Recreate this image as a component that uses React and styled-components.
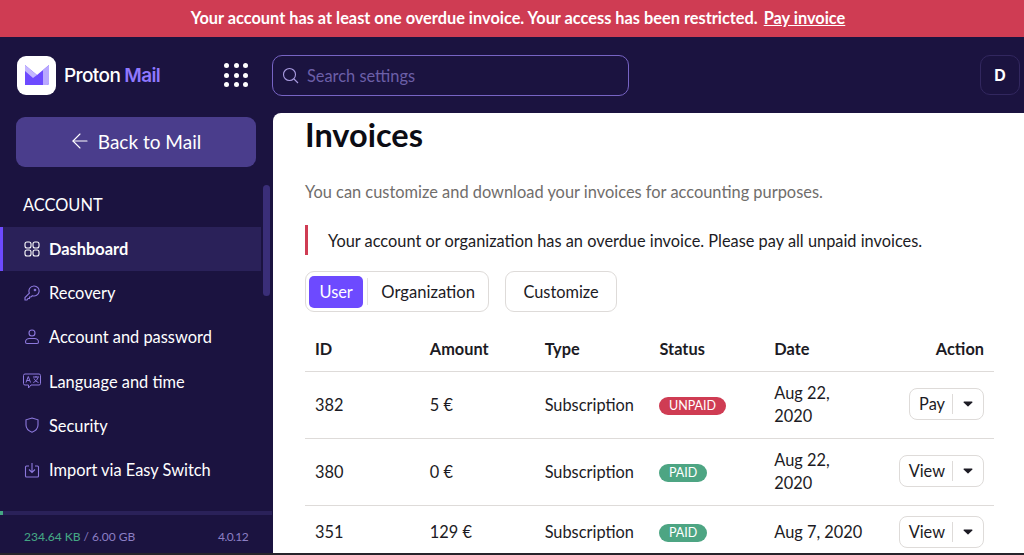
import styled, { createGlobalStyle } from "styled-components";
import { ArrowLeft } from "lucide-react";

const GlobalStyle = createGlobalStyle`
  html, body {
    margin: 0;
    height: 100%;
    overflow: hidden;
    background: #1b1340;
    font-family: "Lato", "Open Sans", sans-serif;
  }
  * {
    box-sizing: border-box;
  }
`;

const Page = styled.div`
  width: 1024px;
  height: 555px;
  display: flex;
  flex-direction: column;
  overflow: hidden;
  border-bottom: 2px solid #26232b;
`;

const Banner = styled.div`
  height: 37px;
  flex: none;
  background: #cf3c53;
  color: #fff;
  font-size: 16.33px;
  font-weight: 700;
  display: flex;
  align-items: center;
  justify-content: center;
  gap: 6px;
  padding: 0 0 2px 12px;

  a {
    color: #fff;
    text-decoration: underline;
  }
`;

const Header = styled.header`
  height: 76px;
  flex: none;
  display: flex;
  align-items: center;
  padding: 0 4px 0 17px;
`;

const LogoBox = styled.div`
  width: 39px;
  height: 39px;
  border-radius: 9px;
  background: #fff;
  display: flex;
  align-items: center;
  justify-content: center;
`;

const LogoText = styled.div`
  margin-left: 8px;
  width: 104px;
  font-size: 19px;
  font-weight: 500;
  font-family: "Inter", sans-serif;
  letter-spacing: -0.6px;
  color: #fff;

  span {
    color: #8f78ff;
    font-weight: 600;
    margin-left: 4px;
  }
`;

const AppsGrid = styled.div`
  margin-left: 56px;
  display: grid;
  grid-template-columns: repeat(3, 5px);
  gap: 4.5px 4.7px;

  i {
    width: 5px;
    height: 5px;
    border-radius: 50%;
    background: #fff;
  }
`;

const SearchBox = styled.div`
  margin-left: 23.6px;
  width: 357px;
  height: 41px;
  border: 1px solid #7764c4;
  border-radius: 10px;
  display: flex;
  align-items: center;
  gap: 8px;
  padding-left: 9px;
  color: #6c5fa8;
  font-size: 16.4px;
`;

const UserButton = styled.div`
  margin-left: auto;
  width: 40px;
  height: 40px;
  border: 1px solid #32275f;
  border-radius: 10px;
  color: #fff;
  font-size: 16px;
  font-weight: 700;
  font-family: "Inter", sans-serif;
  display: flex;
  align-items: center;
  justify-content: center;
`;

const Body = styled.div`
  flex: 1;
  min-height: 0;
  display: flex;
`;

const Sidebar = styled.aside`
  width: 273px;
  flex: none;
  position: relative;
  display: flex;
  flex-direction: column;
  padding-top: 4px;
`;

const BackButton = styled.div`
  margin-left: 16px;
  width: 240px;
  height: 50px;
  border-radius: 9px;
  background: #4a3d8c;
  color: #fff;
  font-size: 19px;
  display: flex;
  align-items: center;
  justify-content: center;
  gap: 6px;
  padding: 0 3px 2px 0;
`;

const SectionTitle = styled.div`
  margin: 27px 0 0 23px;
  height: 22px;
  line-height: 22px;
  color: #fff;
  font-size: 16.4px;
`;

const Nav = styled.nav`
  margin-top: 11px;
  width: 261px;
  display: flex;
  flex-direction: column;
`;

const NavItem = styled.div`
  height: 44.2px;
  display: flex;
  align-items: center;
  padding: 0 0 1px ${(props) => (props.$active ? "19px" : "22px")};
  color: #fff;
  font-size: 16.4px;
  font-weight: ${(props) => (props.$active ? 700 : 400)};
  background: ${(props) => (props.$active ? "#2a2159" : "transparent")};
  border-left: ${(props) => (props.$active ? "3px solid #6d4aff" : "0")};
`;

const NavIconSlot = styled.span`
  width: 27px;
  flex: none;
  display: flex;
  padding-right: 8px;
  justify-content: center;
  color: ${(props) => (props.$active ? "#fff" : "#8c78dc")};
`;

const ScrollThumb = styled.div`
  position: absolute;
  left: 263px;
  top: 72px;
  width: 7px;
  height: 111px;
  border-radius: 4px;
  background: #3a2e78;
`;

const Storage = styled.div`
  margin-top: auto;
  height: 42px;
  display: flex;
  flex-direction: column;
`;

const StorageBar = styled.div`
  height: 4px;
  width: 272px;
  background: #2a2159;

  i {
    display: block;
    width: 3px;
    height: 4px;
    background: #44a583;
  }
`;

const StorageRow = styled.div`
  flex: 1;
  display: flex;
  align-items: center;
  justify-content: space-between;
  padding: 4px 25px 0 24px;
  font-size: 12px;
  color: #8c7fc4;

  b {
    font-weight: 500;
    color: #44a583;
  }
`;

const Version = styled.div`
  letter-spacing: -0.6px;
`;

const Main = styled.main`
  flex: 1;
  min-width: 0;
  background: #fff;
  border-top-left-radius: 8px;
  padding: 4px 30px 0 32px;
  overflow: hidden;
  color: #1c1b24;
`;

const Title = styled.h1`
  margin: 0;
  font-size: 32.5px;
  line-height: 36px;
  font-weight: 700;
  color: #0c0c14;
`;

const Lead = styled.p`
  margin: 27px 0 0;
  font-size: 16.4px;
  line-height: 24px;
  color: #706d6b;
`;

const Alert = styled.div`
  margin-top: 21px;
  height: 30px;
  border-left: 3px solid #cf3c53;
  padding-left: 20px;
  display: flex;
  align-items: center;
  font-size: 16.35px;
`;

const Toolbar = styled.div`
  margin-top: 16px;
  display: flex;
  gap: 16px;
`;

const Toggle = styled.div`
  height: 41px;
  border: 1px solid #dedbd9;
  border-radius: 9px;
  display: flex;
  align-items: center;
  padding: 0 3px;
`;

const ToggleItem = styled.div`
  height: 32px;
  display: flex;
  align-items: center;
  padding: ${(props) => (props.$active ? "0 10.5px" : "0 10px 0 13px")};
  border-radius: 5px;
  font-size: ${(props) => (props.$active ? "16.35px" : "16.6px")};
  background: ${(props) => (props.$active ? "#6d4aff" : "transparent")};
  color: ${(props) => (props.$active ? "#fff" : "#1c1b24")};
`;

const ToggleDivider = styled.i`
  width: 1px;
  height: 27px;
  margin-left: 4px;
  background: #e5e3e1;
`;

const PlainButton = styled.div`
  height: 41px;
  border: 1px solid #dedbd9;
  border-radius: 9px;
  padding: 0 17.5px;
  display: flex;
  align-items: center;
  font-size: 16.35px;
`;

const Table = styled.table`
  margin-top: 15px;
  width: 689px;
  table-layout: fixed;
  border-collapse: collapse;
  font-size: 16.35px;

  th {
    height: 44px;
    padding: 0 10px 1px;
    text-align: left;
    font-weight: 700;
    border-bottom: 1px solid #dedbd9;
  }

  th:last-child {
    text-align: right;
  }

  td {
    height: 54px;
    padding: 9.5px 10px 10.5px;
    line-height: 23px;
    border-bottom: 1px solid #dedbd9;
  }

  td:last-child {
    text-align: right;
  }
`;

const Status = styled.span`
  display: inline-block;
  height: 18px;
  line-height: 18px;
  margin-bottom: 1px;
  padding: 0 9.5px;
  border-radius: 9px;
  font-size: 12.5px;
  color: #fff;
  vertical-align: middle;
  background: ${(props) => (props.$paid ? "#4da583" : "#cf3c53")};
`;

const SplitButton = styled.div`
  display: inline-flex;
  align-items: center;
  height: 32px;
  vertical-align: middle;
  border: 1px solid #dedbd9;
  border-radius: 8px;
  padding-left: 9px;
  font-size: 16.35px;

  span {
    padding-right: 7px;
    border-right: 1px solid #dedbd9;
    height: 20px;
    line-height: 20px;
  }

  svg {
    margin: 0 10px;
  }
`;

const rows = [
  { id: 382, amount: "5 €", status: "UNPAID", date: "Aug 22, 2020", action: "Pay" },
  { id: 380, amount: "0 €", status: "PAID", date: "Aug 22, 2020", action: "View" },
  { id: 351, amount: "129 €", status: "PAID", date: "Aug 7, 2020", action: "View" },
];

function ProtonMark() {
  return (
    <svg width="26" height="22" viewBox="0 0 26 22">
      <path d="M1 1 L13 11 L25 1 V19 A2 2 0 0 1 23 21 H1 Z" fill="#6d4aff" />
      <path d="M1 1 L13 11 L9 14 L1 7 Z" fill="#c4b7ff" />
      <path d="M19 6 L25 1 V19 A2 2 0 0 1 23 21 H19 Z" fill="#b9a8ff" />
    </svg>
  );
}

function DashboardIcon() {
  return (
    <svg width="16" height="16" viewBox="0 0 16 16" fill="none" stroke="currentColor" strokeWidth="1.1">
      <rect x="1" y="1" width="6" height="6" rx="2" />
      <rect x="9" y="1" width="6" height="6" rx="2" />
      <rect x="1" y="9" width="6" height="6" rx="2" />
      <rect x="9" y="9" width="6" height="6" rx="2" />
    </svg>
  );
}

function KeyIcon() {
  return (
    <svg width="16" height="16" viewBox="0 0 16 16" fill="none" stroke="currentColor" strokeWidth="1.1">
      <path d="M10 1a5 5 0 1 1-1.6 9.700L7 12H5.500v1.500H4L3 15H1v-2.500l4.400-4.400A5 5 0 0 1 10 1z" />
      <circle cx="11" cy="5" r="0.8" />
    </svg>
  );
}

function UserIcon() {
  return (
    <svg width="16" height="16" viewBox="0 0 16 16" fill="none" stroke="currentColor" strokeWidth="1.1">
      <circle cx="8" cy="4" r="3" />
      <path d="M1.500 13c0-2 2-3.500 4-3.500h5c2 0 4 1.500 4 3.500 0 1-.8 1.500-1.500 1.500H3c-.8 0-1.500-.5-1.500-1.500z" />
    </svg>
  );
}

function LanguageIcon() {
  return (
    <svg width="18" height="16" viewBox="0 0 18 16" fill="none" stroke="currentColor" strokeWidth="1">
      <path d="M2 1h14a1.500 1.500 0 0 1 1.500 1.500v8A1.500 1.500 0 0 1 16 12H8l-2.500 3v-3H2A1.500 1.500 0 0 1 .5 10.500v-8A1.500 1.500 0 0 1 2 1z" />
      <path d="M3 9.500l2.300-6 2.200 6M3.800 7.500h3M10 4h6M13 3v1.500M15 4.500c-.5 2-2.500 4-4.700 5M11 5.500c.8 1.700 2.500 3.300 4.500 4" />
    </svg>
  );
}

function ShieldIcon() {
  return (
    <svg width="16" height="16" viewBox="0 0 16 16" fill="none" stroke="currentColor" strokeWidth="1.1">
      <path d="M8 1l6 1.800V8c0 3.500-3 6-6 7.200C5 14 2 11.500 2 8V2.800z" />
    </svg>
  );
}

function ImportIcon() {
  return (
    <svg width="16" height="16" viewBox="0 0 16 16" fill="none" stroke="currentColor" strokeWidth="1.1">
      <path d="M5 4H2.500A1 1 0 0 0 1.500 5v9a1 1 0 0 0 1 1h11a1 1 0 0 0 1-1V5a1 1 0 0 0-1-1H11" />
      <path d="M8 1v9M5 7.500L8 10.500l3-3" />
    </svg>
  );
}

function SearchIcon() {
  return (
    <svg width="17" height="17" viewBox="0 0 17 17" fill="none" stroke="#a99be0" strokeWidth="1.1">
      <circle cx="7.500" cy="7.500" r="6" />
      <path d="M12 12l4 4" />
    </svg>
  );
}

function Caret() {
  return (
    <svg width="10" height="6" viewBox="0 0 10 6">
      <path d="M1 .5h8a.6.6 0 0 1 .4 1L5.400 5.300a.6.6 0 0 1-.8 0L.6 1.500A.6.6 0 0 1 1 .5z" fill="#1c1b24" />
    </svg>
  );
}

const navItems = [
  { label: "Dashboard", Icon: DashboardIcon, active: true },
  { label: "Recovery", Icon: KeyIcon },
  { label: "Account and password", Icon: UserIcon },
  { label: "Language and time", Icon: LanguageIcon },
  { label: "Security", Icon: ShieldIcon },
  { label: "Import via Easy Switch", Icon: ImportIcon },
];

function App() {
  return (
    <Page>
      <GlobalStyle />
      <Banner>
        Your account has at least one overdue invoice. Your access has been restricted.
        <a>Pay invoice</a>
      </Banner>
      <Header>
        <LogoBox>
          <ProtonMark />
        </LogoBox>
        <LogoText>
          Proton<span>Mail</span>
        </LogoText>
        <AppsGrid>
          {Array.from({ length: 9 }).map((_, i) => (
            <i key={i} />
          ))}
        </AppsGrid>
        <SearchBox>
          <SearchIcon />
          Search settings
        </SearchBox>
        <UserButton>D</UserButton>
      </Header>
      <Body>
        <Sidebar>
          <BackButton>
            <ArrowLeft size={24} strokeWidth={1.1} />
            Back to Mail
          </BackButton>
          <SectionTitle>ACCOUNT</SectionTitle>
          <Nav>
            {navItems.map(({ label, Icon, active }) => (
              <NavItem key={label} $active={active}>
                <NavIconSlot $active={active}>
                  <Icon />
                </NavIconSlot>
                {label}
              </NavItem>
            ))}
          </Nav>
          <ScrollThumb />
          <Storage>
            <StorageBar>
              <i />
            </StorageBar>
            <StorageRow>
              <div>
                <b>234.64 KB</b> / 6.00 GB
              </div>
              <Version>4.0.12</Version>
            </StorageRow>
          </Storage>
        </Sidebar>
        <Main>
          <Title>Invoices</Title>
          <Lead>You can customize and download your invoices for accounting purposes.</Lead>
          <Alert>Your account or organization has an overdue invoice. Please pay all unpaid invoices.</Alert>
          <Toolbar>
            <Toggle>
              <ToggleItem $active>User</ToggleItem>
              <ToggleDivider />
              <ToggleItem>Organization</ToggleItem>
            </Toggle>
            <PlainButton>Customize</PlainButton>
          </Toolbar>
          <Table>
            <thead>
              <tr>
                <th>ID</th>
                <th>Amount</th>
                <th>Type</th>
                <th>Status</th>
                <th>Date</th>
                <th>Action</th>
              </tr>
            </thead>
            <tbody>
              {rows.map((row) => (
                <tr key={row.id}>
                  <td>{row.id}</td>
                  <td>{row.amount}</td>
                  <td>Subscription</td>
                  <td>
                    <Status $paid={row.status === "PAID"}>{row.status}</Status>
                  </td>
                  <td>{row.date}</td>
                  <td>
                    <SplitButton>
                      <span>{row.action}</span>
                      <Caret />
                    </SplitButton>
                  </td>
                </tr>
              ))}
            </tbody>
          </Table>
        </Main>
      </Body>
    </Page>
  );
}

export default App;
